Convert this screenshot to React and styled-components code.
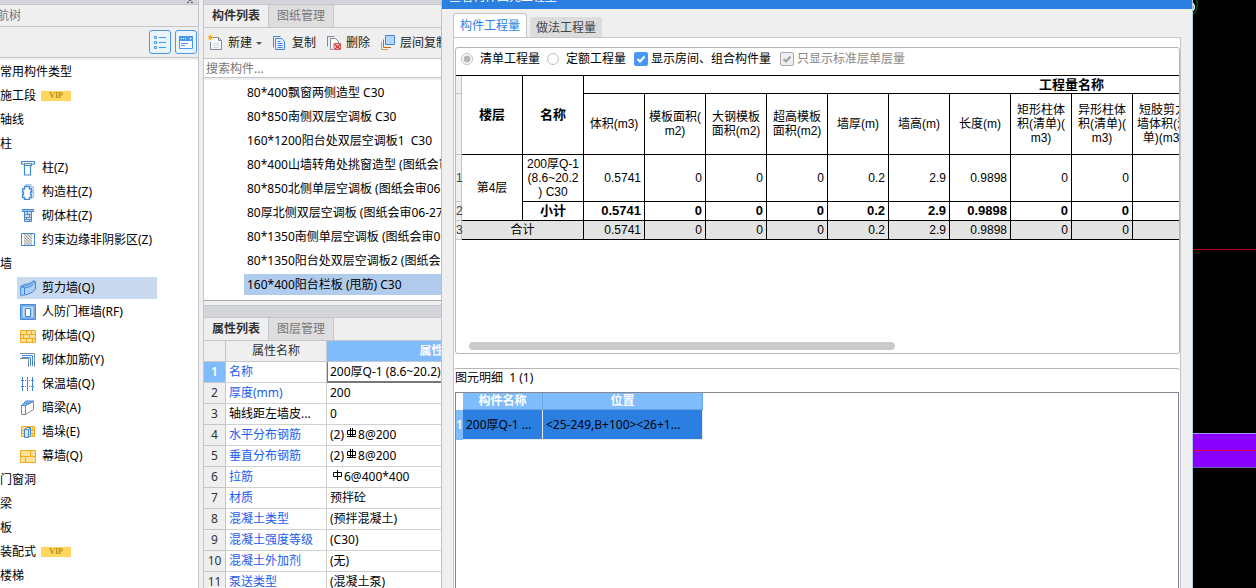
import React, { useState } from 'react';
import styled, { createGlobalStyle, css } from 'styled-components';

const GlobalStyle = createGlobalStyle`
  * {
    box-sizing: border-box;
  }
  body {
    margin: 0;
    overflow: hidden;
    background: #efefef;
    color: #000;
    font: 12px/16px "Noto Sans", "Noto Sans CJK SC", sans-serif;
  }
  button, input {
    margin: 0;
    padding: 0;
    font: inherit;
    color: inherit;
  }
`;

const navItems = [
  { label: '常用构件类型' },
  { label: '施工段', vip: true },
  { label: '轴线' },
  { label: '柱' },
  { label: '柱(Z)', icon: 'column' },
  { label: '构造柱(Z)', icon: 'structColumn' },
  { label: '砌体柱(Z)', icon: 'brickColumn' },
  { label: '约束边缘非阴影区(Z)', icon: 'hatch' },
  { label: '墙' },
  { label: '剪力墙(Q)', icon: 'shearWall' },
  { label: '人防门框墙(RF)', icon: 'frameWall' },
  { label: '砌体墙(Q)', icon: 'brickWall' },
  { label: '砌体加筋(Y)', icon: 'rebar' },
  { label: '保温墙(Q)', icon: 'insulation' },
  { label: '暗梁(A)', icon: 'beam' },
  { label: '墙垛(E)', icon: 'pier' },
  { label: '幕墙(Q)', icon: 'curtain' },
  { label: '门窗洞' },
  { label: '梁' },
  { label: '板' },
  { label: '装配式', vip: true },
  { label: '楼梯' },
];

const components = [
  '80*400飘窗两侧造型 C30',
  '80*850南侧双层空调板 C30',
  '160*1200阳台处双层空调板1  C30',
  '80*400山墙转角处挑窗造型 (图纸会审06-27) C30',
  '80*850北侧单层空调板 (图纸会审06-27) C30',
  '80厚北侧双层空调板 (图纸会审06-27) C30',
  '80*1350南侧单层空调板 (图纸会审06-27) C30',
  '80*1350阳台处双层空调板2 (图纸会审06-27) C30',
  '160*400阳台栏板 (甩筋) C30',
];

const properties = [
  { name: '名称', value: '200厚Q-1 (8.6~20.2) C30' },
  { name: '厚度(mm)', value: '200' },
  { name: '轴线距左墙皮...', value: '0', plain: true },
  { name: '水平分布钢筋', prefix: '(2)', bars: 2, value: '8@200' },
  { name: '垂直分布钢筋', prefix: '(2)', bars: 2, value: '8@200' },
  { name: '拉筋', bars: 1, value: '6@400*400' },
  { name: '材质', value: '预拌砼' },
  { name: '混凝土类型', value: '(预拌混凝土)' },
  { name: '混凝土强度等级', value: '(C30)' },
  { name: '混凝土外加剂', value: '(无)' },
  { name: '泵送类型', value: '(混凝土泵)' },
];

const quantityColumns = [
  ['体积(m3)'],
  ['模板面积(', 'm2)'],
  ['大钢模板', '面积(m2)'],
  ['超高模板', '面积(m2)'],
  ['墙厚(m)'],
  ['墙高(m)'],
  ['长度(m)'],
  ['矩形柱体', '积(清单)(', 'm3)'],
  ['异形柱体', '积(清单)(', 'm3)'],
  ['短肢剪力', '墙体积(清', '单)(m3)'],
];
const quantities = ['0.5741', '0', '0', '0', '0.2', '2.9', '0.9898', '0', '0', '0'];
const TOTAL_COLUMNS = 16;

const BLUE = '#3f87d9';
const GREY = '#7d8b99';
const GOLD = '#f5a81c';

const iconShapes = {
  column: (
    <g fill="#fff" stroke={BLUE} strokeWidth="1.2">
      <path d="M4.500 5.500v9.500h6v-9.500" />
      <path d="M1.500 1.500h13v2.500h-3v1.500h-7V4h-3z" />
      <path d="M4 3.500h8" stroke={GREY} />
    </g>
  ),
  structColumn: (
    <g fill="none">
      <path d="M6 2V.7h5V3h2.500v3.500h-1v2h1V13h-2" stroke="#a9c8ec" strokeWidth="1.3" />
      <path d="M4.500 2.500h5V5h2v3h-1v2.500h1v3h-2v2h-5v-2h-2v-3h1V8h-1V5h2z" fill="#fff" stroke={BLUE} strokeWidth="1.3" />
    </g>
  ),
  brickColumn: (
    <g fill="#cfe2f7" stroke={BLUE}>
      <path d="M4.500 3.500h7v10h-7z" />
      <path d="M2.500 1.500h11v2h-11z" fill="#a9cbf2" />
      <path d="M4.500 6.500h7M4.500 9.500h7M4.500 11.500h7M7.500 4v2.500M9.500 6.500v3M6.500 9.500v2M9.500 11.500v2" stroke="#6b88a8" />
    </g>
  ),
  hatch: (
    <g>
      <path d="M1.500 1.500h13v12h-13z" fill="#fff" stroke={BLUE} />
      <path d="M4 2h8v11H4z" fill="#ddd" />
      <path d="M4 2l8 8M4 5l8 8M4 8l5 5M7 2l5 5M4 11l2 2M10 2l2 2" stroke="#999" strokeWidth=".8" />
    </g>
  ),
  shearWall: (
    <g stroke={BLUE} strokeLinejoin="round">
      <path d="M.7 6.500C6 6.500 11 5 14 .7l1.500 1V9C12 13.500 6 15.300 .7 15.300z" fill="#a9d0f8" />
      <path d="M.7 6.500L4 4.500C8 4.500 11 3 14 .7M.7 6.500l3.800 1.300C9 7.800 13 5.500 15.500 1.700M4.500 7.800v7" fill="none" />
    </g>
  ),
  frameWall: (
    <g>
      <path d="M.5.500h15v15H.5z" fill="#7fb0ea" stroke={BLUE} />
      <path d="M3.500 3.500h9v9h-9z" fill="#a9cbf2" stroke="#cfe2f7" />
      <path d="M5.500 4.500h5v8h-5z" fill="#fff" stroke={BLUE} />
    </g>
  ),
  brickWall: (
    <g stroke={GOLD}>
      <path d="M.5 2.500h15v12H.5z" fill="#ffe29a" />
      <path d="M.5 6.500h15M.5 10.500h15M6.500 2.500v4M11.500 2.500v4M3.500 6.500v4M9.500 6.500v4M6.500 10.500v4M12.500 10.500v4" />
    </g>
  ),
  rebar: (
    <g fill="none">
      <path d="M0 1.500h14.500V15M0 6.500h8.500V15" stroke={GREY} />
      <path d="M2 3.500h10.500V14M2 5.500h8.500V14" stroke={BLUE} />
    </g>
  ),
  insulation: (
    <g stroke={BLUE}>
      <path d="M2.500 1v14M7.500 1v14M12.500 1v14" />
      <path d="M1 4.500h13M1 10.500h13" strokeDasharray="1 1" />
    </g>
  ),
  beam: (
    <g strokeLinejoin="round">
      <path d="M1.500 5.500h4v9h-4zM5.500 5.500L13.500 1.500v8l-8 5" fill="#fff" stroke={GREY} />
      <path d="M1.500 5.500L6 1h7.500l-8 4.500zM4 3.200h6" fill="#9cc7f5" stroke={BLUE} />
    </g>
  ),
  pier: (
    <g>
      <path d="M1.500 2.500h13v10h-13z" fill="#ffe29a" stroke={GOLD} />
      <path d="M1.500 6.500h13M1.500 9.500h13M12.500 3.500v3M13 9.500v3" stroke={GOLD} />
      <path d="M4.500 5.500l2-2h4v8l-2 2h-4zM4.500 5.500h4l2-2M8.500 5.500v8" fill="#cfe6fd" stroke={BLUE} />
    </g>
  ),
  curtain: (
    <g stroke={GOLD}>
      <path d="M.5 2.500h15v12H.5z" fill="#ffe29a" />
      <path d="M.5 8.500h15M10.500 2.500v6M5.500 8.500v6" />
    </g>
  ),
  create: (
    <g fill="none">
      <path d="M5 2.500h5.500l3 3v9h-11V7" fill="#fafafa" stroke={GREY} />
      <path d="M10.500 2.500v3h3" stroke={GREY} />
      <path d="M5 8.500h6M5 10.500h6M5 12.500h6" stroke="#d4d8dc" />
      <path d="M.5.500l4 4M4.500.500l-4 4M2.500 0v5M0 2.500h5" stroke={GOLD} />
    </g>
  ),
  copy: (
    <g fill="none" stroke={BLUE}>
      <path d="M1.500 12.500v-11h7" />
      <path d="M3.500 3.500h6l3 3v8h-9z" fill="#e6f1fd" />
      <path d="M5.500 6.500h3M5.500 8.500h5M5.500 10.500h5M5.500 12.500h5" />
    </g>
  ),
  remove: (
    <g fill="none" stroke={GREY}>
      <path d="M1.500 11.500v-10h7" />
      <path d="M7 14.500H4.500v-11h5l3 3V8" fill="#fafafa" />
      <path d="M8 8.500h6.500v6H8z" fill="#f7d3d3" stroke="#d9534f" />
      <path d="M9 9.500l5 4.500M14 9.500L9 14" stroke="#d9333a" strokeWidth="1.300" />
    </g>
  ),
  layerCopy: (
    <g fill="none">
      <path d="M1.500 7v7.500H8" stroke="#e89a4a" />
      <path d="M3.500 4.500v8H11" stroke="#c86a1a" />
      <path d="M5.500.500h9v9h-9z" fill="#b5d6fb" stroke={BLUE} />
    </g>
  ),
  listView: (
    <g stroke="#4a98ee" fill="none">
      <path d="M2.500 2.500h2v2h-2zM2.500 7.500h2v2h-2zM2.500 12.500h2v2h-2zM7 3.500h7M7 8.500h7M7 13.500h7" />
    </g>
  ),
  cardView: (
    <g>
      <path d="M1.500 2.500h13v12h-13z" fill="#fff" stroke="#4a98ee" />
      <path d="M1 2h14v5H1z" fill="#4a98ee" />
      <path d="M3 4.500h1M5 4.500h1M7 4.500h1" stroke="#fff" />
      <path d="M11 4h3l-1.500 1.500z" fill="#fff" />
      <path d="M3 9.500h7M3 11.500h4" stroke="#4a98ee" />
    </g>
  ),
};

function Icon({ name }) {
  return (
    <IconSvg viewBox="0 0 16 16" aria-hidden="true">
      {iconShapes[name]}
    </IconSvg>
  );
}

// Rebar grade sign: a box crossed by one or two vertical strokes
function RebarSign({ bars }) {
  return (
    <SignSvg viewBox="0 0 11 12" fill="none" stroke="#000">
      <path d={bars === 2 ? 'M1.500 3.500h8v4h-8zM4.500 1v9M6.500 1v9M1 9.500h9' : 'M1.500 3.500h8v4h-8zM5.500 1v10'} />
    </SignSvg>
  );
}

function Navigator() {
  const [selected, setSelected] = useState('剪力墙(Q)');

  return (
    <NavPanel>
      <Strip>
        <svg width="6" height="3" viewBox="0 0 6 3"><path d="M0 2.500h2M4 2.500h2M1.500 1l1.500-1 1.500 1" stroke="#555" fill="none" /></svg>
      </Strip>
      <NavTitle>导航树</NavTitle>
      <NavTools>
        <ViewButton aria-label="列表"><Icon name="listView" /></ViewButton>
        <ViewButton aria-label="卡片"><Icon name="cardView" /></ViewButton>
      </NavTools>
      <Tree>
        {navItems.map(({ label, icon, vip }) => (
          <TreeRow key={label}>
            <TreeButton
              $child={!!icon}
              $selected={label === selected}
              onClick={() => setSelected(label)}
            >
              {icon && <Icon name={icon} />}
              {label}
              {vip && <Vip>VIP</Vip>}
            </TreeButton>
          </TreeRow>
        ))}
      </Tree>
    </NavPanel>
  );
}

function ComponentPanel() {
  const [selected, setSelected] = useState(8);

  return (
    <SidePanel>
      <Strip />
      <Tabs>
        <Tab $active>构件列表</Tab>
        <Tab>图纸管理</Tab>
      </Tabs>
      <Toolbar>
        <ToolButton><Icon name="create" />新建<Caret /></ToolButton>
        <ToolButton><Icon name="copy" />复制</ToolButton>
        <ToolButton><Icon name="remove" />删除</ToolButton>
        <ToolButton><Icon name="layerCopy" />层间复制</ToolButton>
      </Toolbar>
      <Search placeholder="搜索构件..." aria-label="搜索构件" />
      <List>
        {components.map((name, i) => (
          <ListRow key={name}>
            <ListButton $selected={i === selected} onClick={() => setSelected(i)}>{name}</ListButton>
          </ListRow>
        ))}
      </List>
      <Strip $tall />
      <Tabs>
        <Tab $active>属性列表</Tab>
        <Tab>图层管理</Tab>
      </Tabs>
      <PropertyTable>
        <colgroup>
          <col width="22" />
          <col width="101" />
          <col width="222" />
        </colgroup>
        <thead>
          <tr>
            <PropertyHead />
            <PropertyHead>属性名称</PropertyHead>
            <PropertyHead $active>属性值</PropertyHead>
          </tr>
        </thead>
        <tbody>
          {properties.map(({ name, value, plain, prefix, bars }, i) => (
            <tr key={name}>
              <PropertyHead as="th" scope="row" $active={i === 0}>{i + 1}</PropertyHead>
              <PropertyName $plain={plain}>{name}</PropertyName>
              <PropertyValue $active={i === 0}>
                {prefix}
                {bars && <RebarSign bars={bars} />}
                {value}
              </PropertyValue>
            </tr>
          ))}
        </tbody>
      </PropertyTable>
    </SidePanel>
  );
}

function QuantityTable() {
  return (
    <Grid>
      <colgroup>
        <col width="6" />
        {Array.from({ length: TOTAL_COLUMNS + 2 }, (_, i) => <col key={i} width="61" />)}
      </colgroup>
      <thead>
        <GridRow $height={18}>
          <Gutter />
          <GridHead rowSpan={2} $bold>楼层</GridHead>
          <GridHead rowSpan={2} $bold>名称</GridHead>
          <GridHead colSpan={TOTAL_COLUMNS} $bold>工程量名称</GridHead>
        </GridRow>
        <GridRow $height={61}>
          <Gutter />
          {quantityColumns.map((lines) => (
            <GridHead key={lines.join('')}>
              {lines.map((line) => <Line key={line}>{line}</Line>)}
            </GridHead>
          ))}
        </GridRow>
      </thead>
      <tbody>
        <GridRow $height={47}>
          <Gutter>1</Gutter>
          <GridCell rowSpan={2} $center>第4层</GridCell>
          <GridCell $center>
            <Line>200厚Q-1</Line>
            <Line>(8.6~20.2</Line>
            <Line>) C30</Line>
          </GridCell>
          {quantities.map((q, i) => <GridCell key={i}>{q}</GridCell>)}
        </GridRow>
        <GridRow $height={19}>
          <Gutter>2</Gutter>
          <GridCell $center $bold>小计</GridCell>
          {quantities.map((q, i) => <GridCell key={i} $bold>{q}</GridCell>)}
        </GridRow>
        <GridRow $height={19} $total>
          <Gutter>3</Gutter>
          <GridCell colSpan={2} $center>合计</GridCell>
          {quantities.map((q, i) => <GridCell key={i}>{q}</GridCell>)}
        </GridRow>
      </tbody>
    </Grid>
  );
}

function QuantityDialog() {
  const [mode, setMode] = useState('bill');
  const [showRooms, setShowRooms] = useState(true);

  return (
    <Dialog>
      <TitleBar>查看构件图元工程量</TitleBar>
      <DialogTabs>
        <DialogTab $active>构件工程量</DialogTab>
        <DialogTab>做法工程量</DialogTab>
      </DialogTabs>
      <Pane>
        <Group>
          <Options>
            <Option $width={86}>
              <Radio type="radio" name="mode" checked={mode === 'bill'} onChange={() => setMode('bill')} />
              清单工程量
            </Option>
            <Option $width={87}>
              <Radio type="radio" name="mode" checked={mode === 'quota'} onChange={() => setMode('quota')} />
              定额工程量
            </Option>
            <Option $width={146} $tight>
              <CheckWrap>
                <Check type="checkbox" checked={showRooms} onChange={(e) => setShowRooms(e.target.checked)} />
                <Tick viewBox="0 0 14 14"><path d="M3.500 7l2.500 2.500L10.500 4.500" /></Tick>
              </CheckWrap>
              显示房间、组合构件量
            </Option>
            <Option $tight $disabled>
              <CheckWrap>
                <Check type="checkbox" checked disabled readOnly />
                <Tick viewBox="0 0 14 14" $disabled><path d="M3.500 7l2.500 2.500L10.500 4.500" /></Tick>
              </CheckWrap>
              只显示标准层单层量
            </Option>
          </Options>
          <GridScroller><QuantityTable /></GridScroller>
          <ScrollTrack><ScrollThumb /></ScrollTrack>
        </Group>
        <DetailGroup>
          <DetailTitle>图元明细  1 (1)</DetailTitle>
          <DetailFrame>
            <DetailTable>
              <colgroup>
                <col width="7" />
                <col width="80" />
                <col width="160" />
              </colgroup>
              <thead>
                <tr>
                  <td />
                  <DetailHead>构件名称</DetailHead>
                  <DetailHead>位置</DetailHead>
                </tr>
              </thead>
              <tbody>
                <tr>
                  <DetailNumber>1</DetailNumber>
                  <DetailCell>200厚Q-1 ...</DetailCell>
                  <DetailCell>&lt;25-249,B+100&gt;&lt;26+1...</DetailCell>
                </tr>
              </tbody>
            </DetailTable>
          </DetailFrame>
        </DetailGroup>
      </Pane>
    </Dialog>
  );
}

function Drawing() {
  return (
    <DrawingArea>
      <svg width="100%" height="588">
        <path d="M0 14Q5 12 4 0" fill="none" stroke="#0a7a1a" />
        <path d="M0 3.500q2.500 3.500 0 7" fill="none" stroke="#fff" strokeWidth="1.500" />
        <rect y="249" width="100%" height="1" fill="#c00000" />
        <rect y="433" width="100%" height="35" fill="#8a00ff" />
        <rect y="433" width="100%" height="1" fill="#9a9aff" />
        <rect y="450" width="100%" height="1" fill="#e00040" />
        <rect y="467" width="100%" height="1" fill="#6a62b0" />
      </svg>
    </DrawingArea>
  );
}

export default function App() {
  return (
    <Window>
      <GlobalStyle />
      <Navigator />
      <ComponentPanel />
      <QuantityDialog />
      <Drawing />
    </Window>
  );
}

const Window = styled.div`
  display: flex;
  height: 100vh;
  overflow: hidden;
`;

const IconSvg = styled.svg`
  flex: none;
  width: 16px;
  height: 16px;
`;
const SignSvg = styled.svg`
  width: 11px;
  height: 12px;
  margin: 0 1px 0 2px;
  vertical-align: 0;
`;

/* shared panel parts */
const Strip = styled.div`
  display: flex;
  flex: none;
  justify-content: flex-end;
  height: ${(props) => (props.$tall ? '13px' : '5px')};
  margin-top: ${(props) => (props.$tall ? '4px' : '0')};
  padding-right: 5px;
  background: #d3d5db;
  border-bottom: 1px solid #c3c6cc;
  ${(props) => props.$tall && css`
    border-top: 1px solid #c3c6cc;
  `}
`;

/* navigation tree */
const NavPanel = styled.nav`
  display: flex;
  flex-direction: column;
  flex: none;
  width: 199px;
  overflow: hidden;
  border-right: 1px solid #c3c4ca;
`;
const NavTitle = styled.div`
  flex: none;
  height: 22px;
  margin-left: -15px;
  line-height: 22px;
  color: #777;
  border-bottom: 1px solid #c3c6cc;
`;
const NavTools = styled.div`
  display: flex;
  flex: none;
  justify-content: flex-end;
  align-items: center;
  gap: 4px;
  height: 31px;
  padding-right: 1px;
  border-bottom: 1px solid #c3c6cc;
`;
const ViewButton = styled.button`
  display: flex;
  align-items: center;
  justify-content: center;
  width: 22px;
  height: 24px;
  background: #eaf4ff;
  border: 1px solid #4a98ee;
  border-radius: 3px;
`;
const Tree = styled.ul`
  flex: 1;
  min-height: 0;
  margin: 0;
  padding: 0;
  list-style: none;
  background: #fff;
  border-top: 2px solid #efefef;
`;
const TreeRow = styled.li`
  display: flex;
  align-items: center;
  height: 24px;
`;
const TreeButton = styled.button`
  display: flex;
  align-items: center;
  gap: 5px;
  height: 22px;
  border: 0;
  white-space: nowrap;
  background: ${(props) => (props.$selected ? '#c9d9f0' : 'none')};
  ${(props) => props.$child && css`
    gap: 6px;
    width: 140px;
    margin-left: 17px;
    padding-left: 3px;
  `}
`;
const Vip = styled.span`
  width: 30px;
  height: 10px;
  font: bold 8px/10px "Liberation Serif", serif;
  text-align: center;
  color: #b98a10;
  background: #ffd75e;
`;

/* component list and properties */
const SidePanel = styled.section`
  display: flex;
  flex-direction: column;
  flex: none;
  width: 238px;
  margin-left: 4px;
  overflow: hidden;
  border-left: 1px solid #c3c6cc;
`;
const Tabs = styled.div`
  display: flex;
  flex: none;
  height: 23px;
  border-bottom: 1px solid #c3c6cc;
`;
const Tab = styled.button`
  width: 65px;
  border: 0;
  border-right: 1px solid #c3c6cc;
  font-weight: ${(props) => (props.$active ? 600 : 400)};
  color: ${(props) => (props.$active ? '#333' : '#777')};
  background: ${(props) => (props.$active ? '#efefef' : '#dedede')};
`;
const Toolbar = styled.div`
  display: flex;
  align-items: center;
  flex: none;
  gap: 10px;
  height: 31px;
  padding-left: 4px;
  border-bottom: 1px solid #c3c6cc;
`;
const ToolButton = styled.button`
  display: flex;
  align-items: center;
  flex: none;
  gap: 4px;
  border: 0;
  color: #222;
  background: none;
`;
const Caret = styled.span`
  border: 3px solid transparent;
  border-top-color: #555;
  border-bottom: 0;
`;
const Search = styled.input`
  flex: none;
  height: 19px;
  padding-left: 2px;
  border: 0;
  border-bottom: 1px solid #c3c6cc;
  outline: none;
  background: #fff;
  &::placeholder {
    color: #777;
  }
`;
const List = styled.ul`
  flex: none;
  height: 223px;
  margin: 0;
  padding: 0 0 0 40px;
  list-style: none;
  background: #fff;
  border-top: 2px solid #efefef;
  border-bottom: 1px solid #a9a9a9;
`;
const ListRow = styled.li`
  height: 24px;
`;
const ListButton = styled.button`
  width: 100%;
  height: 21px;
  margin-top: 2px;
  padding-left: 3px;
  border: 0;
  overflow: hidden;
  text-align: left;
  white-space: pre;
  background: ${(props) => (props.$selected ? '#b1cbed' : 'none')};
`;
const PropertyTable = styled.table`
  width: 345px;
  table-layout: fixed;
  border-spacing: 0;
  background: #fff;
`;
const PropertyHead = styled.th`
  height: 21px;
  padding: 0;
  font-weight: ${(props) => (props.$active ? 600 : 400)};
  color: ${(props) => (props.$active ? '#fff' : '#333')};
  background: ${(props) => (props.$active ? '#80bbfc' : '#efefef')};
  border-right: 1px solid #c3c6cc;
  border-bottom: 1px solid #c3c6cc;
`;
const PropertyName = styled.td`
  padding: 0 3px;
  white-space: nowrap;
  color: ${(props) => (props.$plain ? '#000' : '#1c5cf0')};
  border-right: 1px solid #d0d0d0;
  border-bottom: 1px solid #d0d0d0;
`;
const PropertyValue = styled.td`
  padding: 0 3px;
  white-space: nowrap;
  border-bottom: 1px solid #d0d0d0;
  ${(props) => props.$active && css`
    padding-left: 2px;
    border: 1px solid #777;
    border-bottom-width: 2px;
    border-top: 0;
  `}
`;

/* quantity dialog */
const Dialog = styled.section`
  display: flex;
  flex-direction: column;
  flex: 1;
  min-width: 0;
  background: #efefef;
  border-left: 1px solid #b9c3d0;
  border-right: 1px solid #b4cbe8;
`;
const TitleBar = styled.header`
  display: flex;
  align-items: flex-end;
  flex: none;
  height: 9px;
  padding: 0 0 4px 7px;
  color: #fff;
  background: #2b7fe1;
`;
const DialogTabs = styled.div`
  display: flex;
  align-items: flex-end;
  flex: none;
  gap: 3px;
  height: 28px;
  padding-left: 11px;
`;
const DialogTab = styled.button`
  width: ${(props) => (props.$active ? '74px' : '72px')};
  height: ${(props) => (props.$active ? '24px' : '20px')};
  border: 1px solid ${(props) => (props.$active ? '#c6c6c6' : '#dcdcdc')};
  border-bottom: 0;
  border-radius: 3px 3px 0 0;
  color: ${(props) => (props.$active ? '#2b7fe1' : '#444')};
  background: ${(props) => (props.$active ? '#fff' : '#dcdcdc')};
`;
const Pane = styled.div`
  display: flex;
  flex-direction: column;
  flex: 1;
  gap: 14px;
  min-height: 0;
  margin: 0 11px;
  padding-top: 9px;
  background: #fff;
  border: 1px solid #c3c6cc;
  border-bottom: 0;
`;
const Group = styled.div`
  flex: none;
  margin-left: 1px;
  border: 1px solid #b5b5b5;
  border-radius: 3px;
  overflow: hidden;
`;
const Options = styled.div`
  display: flex;
  align-items: center;
  height: 27px;
  padding: 0 0 6px 5px;
`;
const Option = styled.label`
  display: flex;
  align-items: center;
  flex: none;
  gap: ${(props) => (props.$tight ? '3px' : '7px')};
  width: ${(props) => (props.$width ? `${props.$width}px` : 'auto')};
  color: ${(props) => (props.$disabled ? '#888' : '#000')};
`;
const Radio = styled.input`
  appearance: none;
  width: 12px;
  height: 12px;
  border: 1px solid #bdbdbd;
  border-radius: 50%;
  background: #fff;
  &:checked {
    background: radial-gradient(circle, #b5b5b5 3px, #fff 4px);
  }
`;
const CheckWrap = styled.span`
  display: grid;
  width: 14px;
  height: 14px;
  & > * {
    grid-area: 1 / 1;
  }
`;
const Check = styled.input`
  appearance: none;
  width: 14px;
  height: 14px;
  border: 1px solid #a8a8a8;
  border-radius: 2px;
  background: #efefef;
  &:checked:enabled {
    border-color: #4a98f5;
    background: #4a98f5;
  }
`;
const Tick = styled.svg`
  pointer-events: none;
  fill: none;
  stroke: ${(props) => (props.$disabled ? '#a0a0a0' : '#fff')};
  stroke-width: 2;
`;
const GridScroller = styled.div`
  height: 266px;
  overflow: hidden;
`;
const Grid = styled.table`
  width: 1104px;
  table-layout: fixed;
  border-spacing: 0;
  border-top: 1px solid #000;
  font: 12px/14px "Liberation Sans", "Noto Sans CJK SC", sans-serif;
`;
const GridRow = styled.tr`
  height: ${(props) => props.$height}px;
  background: ${(props) => (props.$total ? '#e3e3e3' : '#fff')};
`;
const Gutter = styled.th`
  padding: 0;
  font-weight: 400;
  color: #444;
  background: #efefef;
  border-right: 1px solid #c3c6cc;
  border-bottom: 1px solid #c3c6cc;
`;
const gridBorder = css`
  border-right: 1px solid #000;
  border-bottom: 1px solid #000;
`;
const GridHead = styled.th`
  ${gridBorder}
  padding: 0;
  white-space: nowrap;
  overflow: hidden;
  font-size: ${(props) => (props.$bold ? '13px' : '12px')};
  font-weight: ${(props) => (props.$bold ? 700 : 400)};
`;
const GridCell = styled.td`
  ${gridBorder}
  padding: ${(props) => (props.$center ? '0' : '0 3px 0 0')};
  text-align: ${(props) => (props.$center ? 'center' : 'right')};
  white-space: nowrap;
  font-size: ${(props) => (props.$bold ? '13px' : '12px')};
  font-weight: ${(props) => (props.$bold ? 700 : 400)};
`;
const Line = styled.div`
  height: 14px;
`;
const ScrollTrack = styled.div`
  height: 12px;
  padding: 1px 0 3px 13px;
`;
const ScrollThumb = styled.div`
  width: 60%;
  height: 8px;
  border-radius: 4px;
  background: #cacaca;
`;
const DetailGroup = styled.div`
  display: flex;
  flex-direction: column;
  flex: 1;
  min-height: 0;
  border-top: 1px solid #b5b5b5;
  border-radius: 3px 3px 0 0;
`;
const DetailTitle = styled.div`
  height: 23px;
  padding-left: 1px;
  line-height: 18px;
  white-space: pre;
`;
const DetailFrame = styled.div`
  flex: 1;
  margin: 0 1px;
  border: 1px solid #828790;
  border-bottom: 0;
`;
const DetailTable = styled.table`
  width: 247px;
  table-layout: fixed;
  border-spacing: 0;
`;
const DetailHead = styled.th`
  height: 17px;
  padding: 0;
  font-weight: 600;
  color: #fff;
  background: #80bbfc;
  border-right: 1px solid #64a5ee;
  border-bottom: 1px solid #64a5ee;
`;
const DetailNumber = styled.th`
  padding: 0;
  font-weight: 600;
  color: #fff;
  background: #80bbfc;
`;
const DetailCell = styled.td`
  height: 30px;
  padding: 0 3px;
  overflow: hidden;
  white-space: nowrap;
  background: #2b7fe1;
  border-right: 1px solid #e6e6e6;
  border-bottom: 1px solid #e6e6e6;
`;

/* model view */
const DrawingArea = styled.div`
  flex: none;
  width: 63px;
  overflow: hidden;
  background: #000;
`;
